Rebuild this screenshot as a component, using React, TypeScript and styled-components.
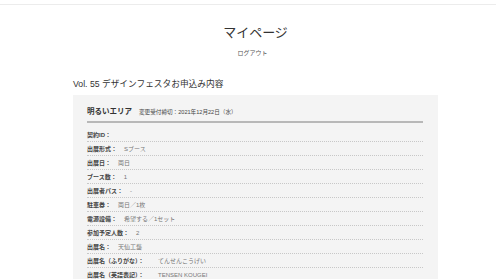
import React from 'react';
import styled, { createGlobalStyle } from 'styled-components';

const GlobalStyle = createGlobalStyle`
  body {
    margin: 0;
    background: #fff;
    font-family: "Liberation Sans", "Noto Sans CJK JP", sans-serif;
    color: #333;
  }
`;

const TopBar = styled.div`
  height: 4px;
  border-bottom: 1px solid #ececec;
`;

const Main = styled.main`
  width: 365px;
  margin-left: 73px;
`;

const PageTitle = styled.h1`
  margin: 20px 0 0;
  font-size: 13px;
  line-height: 16px;
  font-weight: 400;
  text-align: center;
  color: #333;
`;

const Logout = styled.a`
  display: block;
  margin-top: 8px;
  font-size: 6px;
  line-height: 8px;
  text-align: center;
  color: #555;
  margin-right: 6px;
`;

const SectionTitle = styled.h2`
  margin: 21px 0 0;
  font-size: 8.7px;
  line-height: 12px;
  font-weight: 400;
  color: #333;
`;

const Panel = styled.section`
  margin-top: 5px;
  background: #f4f4f4;
  padding: 11px 15px 0 14px;
`;

const PanelHead = styled.div`
  display: flex;
  align-items: baseline;
  gap: 7px;
  padding-bottom: 3px;
  border-bottom: 2px solid #b8b8b8;
`;

const AreaName = styled.h3`
  margin: 0;
  font-size: 7.5px;
  line-height: 12px;
  font-weight: 700;
  color: #333;
`;

const Deadline = styled.span`
  font-size: 5.6px;
  color: #444;
`;

const List = styled.dl`
  margin: 5px 0 0;
`;

const Row = styled.div`
  display: flex;
  align-items: center;
  height: 13px;
  border-bottom: 1px dotted #c8c8c8;
  font-size: 6px;
`;

const Label = styled.dt`
  font-weight: 700;
  color: #444;
`;

const Value = styled.dd<{ $wide?: boolean }>`
  margin: 0 0 0 ${(p) => (p.$wide ? '14px' : '7px')};
  color: #777;
`;

const rows: [string, string, boolean?][] = [
  ['契約ID：', ''],
  ['出展形式：', 'Sブース'],
  ['出展日：', '両日'],
  ['ブース数：', '1'],
  ['出展者パス：', '-'],
  ['駐車券：', '両日／1枚'],
  ['電源設備：', '希望する／1セット'],
  ['参加予定人数：', '2'],
  ['出展名：', '天仙工藝'],
  ['出展名（ふりがな）：', 'てんせんこうげい', true],
  ['出展名（英語表記）：', 'TENSEN KOUGEI', true],
];

const App = () => {
  return (
    <>
      <GlobalStyle />
      <TopBar />
      <Main>
        <PageTitle>マイページ</PageTitle>
        <Logout>ログアウト</Logout>
        <SectionTitle>Vol. 55 デザインフェスタお申込み内容</SectionTitle>
        <Panel>
          <PanelHead>
            <AreaName>明るいエリア</AreaName>
            <Deadline>変更受付締切：2021年12月22日（水）</Deadline>
          </PanelHead>
          <List>
            {rows.map(([label, value, wide]) => (
              <Row key={label}>
                <Label>{label}</Label>
                <Value $wide={wide}>{value}</Value>
              </Row>
            ))}
          </List>
        </Panel>
      </Main>
    </>
  );
};

export default App;
